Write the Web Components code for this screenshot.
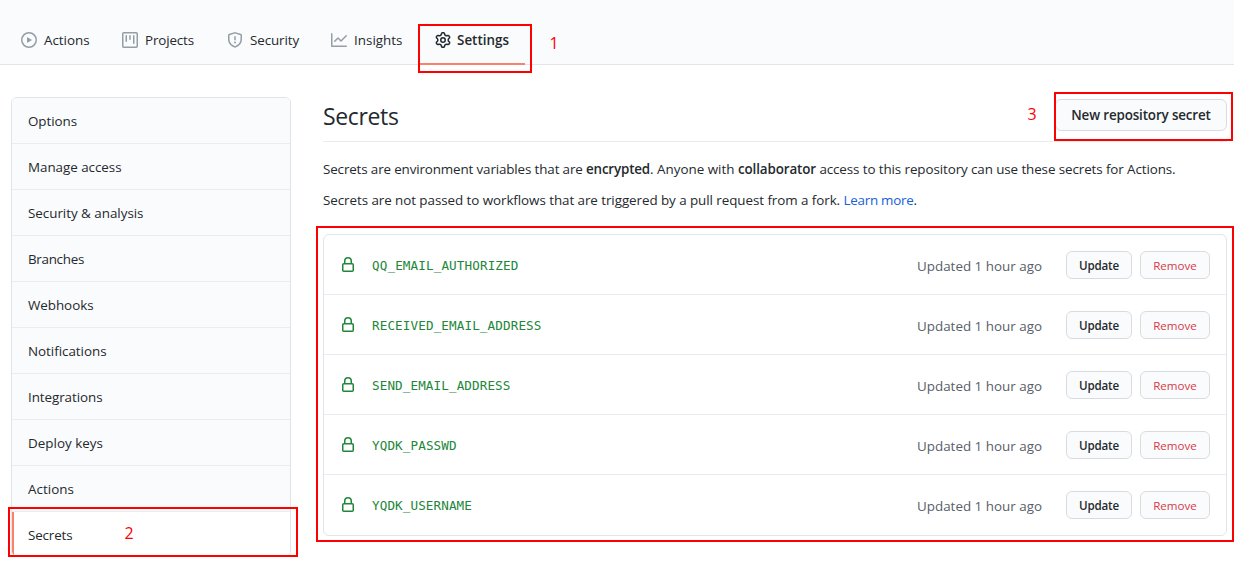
<!DOCTYPE html>
<html lang="en">
<head>
<meta charset="utf-8">
<title>Secrets</title>
<style>
html,body{margin:0;padding:0}
body{width:1234px;height:562px;overflow:hidden;background:#fff;color:#24292e;font:13.4px/21px "Open Sans","Noto Sans",sans-serif}
</style>
</head>
<body>
<settings-page></settings-page>
<script>
const ICONS = {
play:"M1.5 8a6.5 6.5 0 1113 0 6.5 6.5 0 01-13 0zM8 0a8 8 0 100 16A8 8 0 008 0zM6.379 5.227A.25.25 0 006 5.442v5.117a.25.25 0 00.379.214l4.264-2.559a.25.25 0 000-.428L6.379 5.227z",
project:"M1.75 0A1.75 1.75 0 000 1.75v12.5C0 15.216.784 16 1.75 16h12.5A1.75 1.75 0 0016 14.25V1.75A1.75 1.75 0 0014.25 0H1.75zM1.5 1.75a.25.25 0 01.25-.25h12.5a.25.25 0 01.25.25v12.5a.25.25 0 01-.25.25H1.75a.25.25 0 01-.25-.25V1.75zM11.75 3a.75.75 0 00-.75.75v7.5a.75.75 0 001.5 0v-7.5a.75.75 0 00-.75-.75zm-8.25.75a.75.75 0 011.5 0v5.5a.75.75 0 01-1.5 0v-5.5zM8 3a.75.75 0 00-.75.75v3.5a.75.75 0 001.5 0v-3.5A.75.75 0 008 3z",
shield:"M7.467.133a1.75 1.75 0 011.066 0l5.25 1.68A1.75 1.75 0 0115 3.48V7c0 1.566-.32 3.182-1.303 4.682-.983 1.498-2.585 2.813-5.032 3.855a1.7 1.7 0 01-1.33 0c-2.447-1.042-4.049-2.357-5.032-3.855C1.32 10.182 1 8.566 1 7V3.48a1.75 1.75 0 011.217-1.667l5.25-1.68zm.61 1.429a.25.25 0 00-.153 0l-5.25 1.68a.25.25 0 00-.174.238V7c0 1.358.275 2.666 1.057 3.86.784 1.194 2.121 2.34 4.366 3.297a.2.2 0 00.154 0c2.245-.956 3.582-2.104 4.366-3.298C13.225 9.666 13.5 8.36 13.5 7V3.48a.25.25 0 00-.174-.237l-5.25-1.68zM9 10.5a1 1 0 11-2 0 1 1 0 012 0zm-.25-5.75a.75.75 0 10-1.5 0v3a.75.75 0 001.5 0v-3z",
graph:"M1.5 1.75a.75.75 0 00-1.5 0v12.5c0 .414.336.75.75.75h14.5a.75.75 0 000-1.5H1.5V1.75zm14.28 2.53a.75.75 0 00-1.06-1.06L10 7.94 7.53 5.47a.75.75 0 00-1.06 0L3.22 8.72a.75.75 0 001.06 1.06L7 7.06l2.47 2.47a.75.75 0 001.06 0l5.25-5.25z",
gear:"M7.429 1.525a6.593 6.593 0 011.142 0c.036.003.108.036.137.146l.289 1.105c.147.56.55.967.997 1.189.174.086.341.183.501.29.417.278.97.423 1.53.27l1.102-.303c.11-.03.175.016.195.046.219.31.41.641.573.989.014.031.022.11-.059.19l-.815.806c-.411.406-.562.957-.53 1.456a4.588 4.588 0 010 .582c-.032.499.119 1.05.53 1.456l.815.806c.08.08.073.159.059.19a6.494 6.494 0 01-.573.99c-.02.029-.086.074-.195.045l-1.103-.303c-.559-.153-1.112-.008-1.529.27-.16.107-.327.204-.5.29-.449.222-.851.628-.998 1.189l-.289 1.105c-.029.11-.101.143-.137.146a6.613 6.613 0 01-1.142 0c-.036-.003-.108-.037-.137-.146l-.289-1.105c-.147-.56-.55-.967-.997-1.189a4.502 4.502 0 01-.501-.29c-.417-.278-.97-.423-1.53-.27l-1.102.303c-.11.03-.175-.016-.195-.046a6.492 6.492 0 01-.573-.989c-.014-.031-.022-.11.059-.19l.815-.806c.411-.406.562-.957.53-1.456a4.587 4.587 0 010-.582c.032-.499-.119-1.05-.53-1.456l-.815-.806c-.08-.08-.073-.159-.059-.19a6.44 6.44 0 01.573-.99c.02-.029.086-.075.195-.045l1.103.303c.559.153 1.112.008 1.529-.27.16-.107.327-.204.5-.29.449-.222.851-.628.998-1.189l.289-1.105c.029-.11.101-.143.137-.146zM8 0c-.236 0-.47.01-.701.03-.743.065-1.29.615-1.458 1.261l-.29 1.106c-.017.066-.078.158-.211.224a5.994 5.994 0 00-.668.386c-.123.082-.233.09-.3.071L3.27 2.776c-.644-.177-1.392.02-1.82.63a7.977 7.977 0 00-.704 1.217c-.315.675-.111 1.422.363 1.891l.815.806c.05.048.098.147.088.294a6.084 6.084 0 000 .772c.01.147-.038.246-.088.294l-.815.806c-.474.469-.678 1.216-.363 1.891.2.428.436.835.704 1.218.428.609 1.176.806 1.82.63l1.103-.303c.066-.019.176-.011.299.071.213.143.436.272.668.386.133.066.194.158.212.224l.289 1.106c.169.646.715 1.196 1.458 1.26a8.094 8.094 0 001.402 0c.743-.064 1.29-.614 1.458-1.26l.29-1.106c.017-.066.078-.158.211-.224a5.98 5.98 0 00.668-.386c.123-.082.233-.09.3-.071l1.102.302c.644.177 1.392-.02 1.82-.63.268-.382.505-.789.704-1.217.315-.675.111-1.422-.364-1.891l-.814-.806c-.05-.048-.098-.147-.088-.294a6.1 6.1 0 000-.772c-.01-.147.039-.246.088-.294l.814-.806c.475-.469.679-1.216.364-1.891a7.992 7.992 0 00-.704-1.218c-.428-.609-1.176-.806-1.82-.63l-1.103.303c-.066.019-.176.011-.299-.071a5.991 5.991 0 00-.668-.386c-.133-.066-.194-.158-.212-.224L10.16 1.29C9.99.645 9.444.095 8.701.031A8.094 8.094 0 008 0zm1.5 8a1.5 1.5 0 11-3 0 1.5 1.5 0 013 0zM11 8a3 3 0 11-6 0 3 3 0 016 0z",
lock:"M4 4v2h-.25A1.75 1.75 0 002 7.75v5.5c0 .966.784 1.75 1.75 1.75h8.5A1.75 1.75 0 0014 13.25v-5.5A1.75 1.75 0 0012.25 6H12V4a4 4 0 10-8 0zm6.5 2V4a2.5 2.5 0 10-5 0v2h5zM12 7.5h.25a.25.25 0 01.25.25v5.5a.25.25 0 01-.25.25h-8.5a.25.25 0 01-.25-.25v-5.5a.25.25 0 01.25-.25H12z"
};

function define(name, render) {
  customElements.define(name, class extends HTMLElement {
    connectedCallback() {
      if (this.shadowRoot) return;
      this.attachShadow({mode: "open"}).innerHTML = render(this);
    }
  });
}

define("settings-page", () => `
<style>
:host{display:flex;flex-direction:column;position:relative;width:1234px;height:562px;overflow:hidden}
.body{display:grid;grid-template-columns:280px 904px;column-gap:32px;padding:32px 0 0 11px;align-items:start}
</style>
<repo-nav></repo-nav>
<div class="body"><side-menu></side-menu><secrets-panel></secrets-panel></div>
<mark-box style="left:418px;top:24px;width:114px;height:49px"></mark-box>
<mark-box style="left:8px;top:507px;width:290px;height:50px"></mark-box>
<mark-box style="left:1054px;top:92px;width:179px;height:49px"></mark-box>
<mark-box style="left:316px;top:226px;width:918px;height:316px"></mark-box>
<mark-label style="left:544px;top:32px">1</mark-label>
<mark-label style="left:119px;top:522px">2</mark-label>
<mark-label style="left:1022px;top:103px">3</mark-label>`);

define("mark-box", () => `<style>:host{display:block;position:absolute;box-sizing:border-box;border:2px solid #f00}</style>`);
define("mark-label", () => `<style>:host{display:block;position:absolute;width:20px;text-align:center;color:#f00;font-size:16px;line-height:22px}</style><slot></slot>`);

define("oct-icon", el => `<style>:host{display:block;flex:none;width:16px;height:16px}svg{display:block;fill:currentColor}</style>
<svg width="16" height="16" viewBox="0 0 16 16"><path fill-rule="evenodd" d="${ICONS[el.getAttribute("name")]}"/></svg>`);

define("repo-nav", () => `
<style>:host{display:flex;box-sizing:border-box;height:65px;padding-left:5px;background:#fafbfc;border-bottom:1px solid #e1e4e8;flex:none}</style>
<nav-tab icon="play" text="Actions" w="45.5" style="width:101px"></nav-tab>
<nav-tab icon="project" text="Projects" w="49" style="width:105px"></nav-tab>
<nav-tab icon="shield" text="Security" w="49" style="width:104px"></nav-tab>
<nav-tab icon="graph" text="Insights" w="48.5" style="width:104px"></nav-tab>
<nav-tab icon="gear" text="Settings" w="52" style="width:106px" active></nav-tab>`);

define("nav-tab", el => `
<style>
:host{display:flex;box-sizing:border-box;height:65px;padding:17px 0 0 16px;align-items:center;border-bottom:2px solid transparent;gap:7px}
:host([active]){font-weight:600;border-color:#f9826c}
oct-icon{color:#959da5}
:host([active]) oct-icon{color:#24292e}
:host([active]){gap:6px}
</style>
<oct-icon name="${el.getAttribute("icon")}"></oct-icon><fit-text w="${el.getAttribute("w")}">${el.getAttribute("text")}</fit-text>`);

const MENU = [["Options",49],["Manage access",93.5],["Security &amp; analysis",115.5],["Branches",56],["Webhooks",65.5],["Notifications",78.5],["Integrations",74.5],["Deploy keys",75],["Actions",46],["Secrets",44.5]];
define("side-menu", () => `
<style>:host{display:flex;flex-direction:column;box-sizing:border-box;border:1px solid #e1e4e8;border-radius:6px;overflow:hidden;height:460px}</style>
${MENU.map(([t, w], i) => `<menu-item${i === 9 ? " selected" : ""}><fit-text w="${w}">${t}</fit-text></menu-item>`).join("")}`);

define("menu-item", () => `
<style>
:host{display:flex;box-sizing:border-box;flex:none;height:46px;padding:1px 16px 0;align-items:center;background:#fafbfc;border-bottom:1px solid #eaecef}
:host([selected]){background:#fff;border-left:2px solid #f9826c;padding-left:14px}
</style><slot></slot>`);

define("ui-button", () => `
<style>
:host{display:flex;box-sizing:border-box;align-items:center;justify-content:center;flex:none;border:1px solid #d9dcdf;border-radius:6px;background:#fafbfc;font-weight:550;height:28px;font-size:11.6px;line-height:18px;padding-top:1px}
:host([large]){height:32px;font-size:13.4px;padding-top:0}
:host([danger]){color:#d73a49;font-weight:500}
</style><slot></slot>`);

const SECRETS = [["QQ_EMAIL_AUTHORIZED",146.5],["RECEIVED_EMAIL_ADDRESS",169.5],["SEND_EMAIL_ADDRESS",138.5],["YQDK_PASSWD",84.7],["YQDK_USERNAME",100]];
define("secrets-panel", () => `
<style>
:host{display:flex;flex-direction:column}
header{display:flex;justify-content:space-between;border-bottom:1px solid #eaecef;padding-top:2px;box-sizing:border-box;height:45px}
h2{margin:0;font-size:23px;line-height:34px;font-weight:400}
ui-button{width:172px}
p{margin:0;white-space:nowrap;display:flex;height:21px}
.one{margin-top:17px}.two{margin-top:10px}
b{font-weight:600}
a{color:#1660d8}
.box{margin-top:23px;box-sizing:border-box;height:302px;border:1px solid #e1e4e8;border-radius:6px;display:flex;flex-direction:column}
</style>
<header><h2><fit-text w="75.5">Secrets</fit-text></h2><ui-button large><fit-text w="139.5">New repository secret</fit-text></ui-button></header>
<p class="one"><fit-text w="263">Secrets are environment variables that are </fit-text><b><fit-text w="64">encrypted</fit-text></b><fit-text w="88">. Anyone with </fit-text><b><fit-text w="78">collaborator</fit-text></b><fit-text w="359.5"> access to this repository can use these secrets for Actions.</fit-text></p>
<p class="two"><fit-text w="520.5">Secrets are not passed to workflows that are triggered by a pull request from a fork. </fit-text><a><fit-text w="70">Learn more</fit-text></a>.</p>
<div class="box">${SECRETS.map(([t, w]) => `<secret-row><fit-text w="${w}">${t}</fit-text></secret-row>`).join("")}</div>`);

define("secret-row", () => `
<style>
:host{display:flex;box-sizing:border-box;height:60px;padding:1px 16px 0;align-items:center;border-bottom:1px solid #eaecef}
:host(:last-child){border-bottom-color:transparent}
oct-icon{color:#22863a}
code{font:12.6px/20px "DejaVu Sans Mono",monospace;color:#22863a;margin-left:16px;padding-top:2px}
.when{color:#586069;margin-left:auto;margin-right:24px;padding-top:3px}
.up{width:66px;margin-right:8px}.rm{width:70px}
</style>
<oct-icon name="lock"></oct-icon><code><slot></slot></code>
<span class="when"><fit-text w="125">Updated 1 hour ago</fit-text></span>
<ui-button class="up"><fit-text w="40">Update</fit-text></ui-button><ui-button class="rm" danger><fit-text w="43.5">Remove</fit-text></ui-button>`);

/* Text whose tracking is adjusted so that it occupies exactly w pixels. */
customElements.define("fit-text", class extends HTMLElement {
  connectedCallback() {
    if (!this.shadowRoot) this.attachShadow({mode: "open"}).innerHTML =
      `<style>:host{display:inline-block;flex:none;white-space:pre}span{display:inline-block}</style><span><slot></slot></span>`;
    const w = parseFloat(this.getAttribute("w"));
    const natural = this.shadowRoot.querySelector("span").getBoundingClientRect().width;
    this.style.letterSpacing = (w - natural) / this.textContent.length + "px";
    this.style.width = w + "px";
  }
});
</script>
</body>
</html>
